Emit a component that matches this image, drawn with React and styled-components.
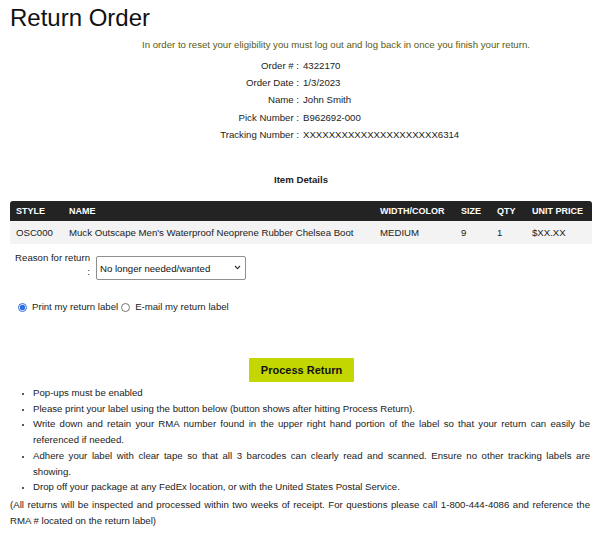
import React, { useState } from "react";
import styled, { createGlobalStyle } from "styled-components";

const GlobalStyle = createGlobalStyle`
  body {
    margin: 0;
    background: #fff;
    font-family: "Liberation Sans", Arial, sans-serif;
    color: #222;
  }
`;

const Page = styled.div`
  padding: 4px 8px 0 10px;
  font-size: 9.65px;
`;

const Title = styled.h1`
  margin: 0;
  font-size: 24px;
  line-height: 28px;
  font-weight: normal;
  color: #111;
`;

const Notice = styled.p`
  margin: 6px 0 0;
  padding-left: 70px;
  text-align: center;
  color: #5a5a14;
  line-height: 14px;
`;

const InfoGrid = styled.div`
  display: grid;
  grid-template-columns: 1fr 1fr;
  column-gap: 4px;
  margin-top: 5px;
  line-height: 17.2px;
`;

const InfoLabel = styled.div`
  text-align: right;
`;

const InfoValue = styled.div`
  text-align: left;
`;

const SectionTitle = styled.div`
  margin-top: 28px;
  text-align: center;
  font-weight: bold;
  line-height: 17px;
`;

const Table = styled.table`
  margin-top: 13px;
  width: 100%;
  border-collapse: collapse;
  table-layout: fixed;
`;

const HeadCell = styled.th`
  background: #232323;
  color: #fff;
  font-size: 9px;
  font-weight: bold;
  text-align: left;
  padding: 0 0 0 6px;
  height: 20px;
  white-space: nowrap;
  &:first-child {
    border-top-left-radius: 3px;
  }
  &:last-child {
    border-top-right-radius: 3px;
  }
`;

const Cell = styled.td`
  background: #f3f3f3;
  padding: 0 0 0 6px;
  height: 23px;
  white-space: nowrap;
`;

const ReasonRow = styled.div`
  display: flex;
  align-items: flex-start;
  margin-top: 12px;
`;

const ReasonLabel = styled.div`
  width: 80px;
  margin-top: -5px;
  text-align: right;
  line-height: 14px;
`;

const SelectWrap = styled.div`
  position: relative;
  margin-left: 6px;
`;

const Select = styled.select`
  appearance: none;
  width: 150px;
  height: 24px;
  border: 1px solid #8f8f8f;
  border-radius: 2px;
  background: #fff;
  font-family: "Liberation Sans", Arial, sans-serif;
  font-size: 9.65px;
  color: #111;
  padding: 0 0 0 3px;
  outline: none;
`;

const Chevron = styled.svg`
  position: absolute;
  right: 5px;
  top: 9px;
  pointer-events: none;
`;

const RadioRow = styled.div`
  display: flex;
  align-items: center;
  margin-top: 20px;
  margin-left: 8px;
  line-height: 14px;
`;

const Radio = styled.input`
  width: 9px;
  height: 9px;
  margin: 0 5px 0 0;
  accent-color: #2f6fe0;
`;

const RadioLabel = styled.label`
  display: flex;
  align-items: center;
  margin-right: 3px;
`;

const ButtonRow = styled.div`
  display: flex;
  justify-content: center;
  margin-top: 44px;
  padding-left: 1px;
`;

const ProcessButton = styled.button`
  width: 105px;
  height: 24px;
  border: none;
  border-radius: 1px;
  background: #c4d600;
  font-family: "Liberation Sans", Arial, sans-serif;
  font-size: 11px;
  font-weight: bold;
  color: #111;
  cursor: pointer;
`;

const Notes = styled.ul`
  margin: 3px 0 0;
  padding-left: 23px;
  line-height: 15.7px;
  text-align: justify;
  padding-right: 2px;
  li::marker {
    font-size: 8px;
  }
`;

const Footer = styled.p`
  margin: 2px 2px 0 0;
  line-height: 16px;
  text-align: justify;
`;

const info = [
  ["Order # :", "4322170"],
  ["Order Date :", "1/3/2023"],
  ["Name :", "John Smith"],
  ["Pick Number :", "B962692-000"],
  ["Tracking Number :", "XXXXXXXXXXXXXXXXXXXXX6314"],
];

const columns = [
  ["STYLE", 53],
  ["NAME", 311],
  ["WIDTH/COLOR", 81],
  ["SIZE", 36],
  ["QTY", 35],
  ["UNIT PRICE", 66],
];

const item = [
  "OSC000",
  "Muck Outscape Men's Waterproof Neoprene Rubber Chelsea Boot",
  "MEDIUM",
  "9",
  "1",
  "$XX.XX",
];

export default function App() {
  const [delivery, setDelivery] = useState("print");
  const [reason, setReason] = useState("none");

  return (
    <Page>
      <GlobalStyle />
      <Title>Return Order</Title>
      <Notice>
        In order to reset your eligibility you must log out and log back in
        once you finish your return.
      </Notice>

      <InfoGrid>
        {info.map(([label, value]) => (
          <React.Fragment key={label}>
            <InfoLabel>{label}</InfoLabel>
            <InfoValue>{value}</InfoValue>
          </React.Fragment>
        ))}
      </InfoGrid>

      <SectionTitle>Item Details</SectionTitle>

      <Table>
        <colgroup>
          {columns.map(([name, w]) => (
            <col key={name} style={{ width: w }} />
          ))}
        </colgroup>
        <thead>
          <tr>
            {columns.map(([name]) => (
              <HeadCell key={name}>{name}</HeadCell>
            ))}
          </tr>
        </thead>
        <tbody>
          <tr>
            {item.map((v, i) => (
              <Cell key={i}>{v}</Cell>
            ))}
          </tr>
        </tbody>
      </Table>

      <ReasonRow>
        <ReasonLabel>Reason for return :</ReasonLabel>
        <SelectWrap>
          <Select value={reason} onChange={(e) => setReason(e.target.value)}>
            <option value="none">No longer needed/wanted</option>
            <option value="size">Wrong size</option>
            <option value="defect">Defective</option>
          </Select>
          <Chevron width="7" height="5" viewBox="0 0 7 5">
            <path d="M1 1 L3.5 3.6 L6 1" fill="none" stroke="#333" strokeWidth="1.1" />
          </Chevron>
        </SelectWrap>
      </ReasonRow>

      <RadioRow>
        <RadioLabel>
          <Radio
            type="radio"
            name="label"
            checked={delivery === "print"}
            onChange={() => setDelivery("print")}
          />
          Print my return label
        </RadioLabel>
        <RadioLabel>
          <Radio
            type="radio"
            name="label"
            checked={delivery === "email"}
            onChange={() => setDelivery("email")}
          />
          E-mail my return label
        </RadioLabel>
      </RadioRow>

      <ButtonRow>
        <ProcessButton>Process Return</ProcessButton>
      </ButtonRow>

      <Notes>
        <li>Pop-ups must be enabled</li>
        <li>
          Please print your label using the button below (button shows after
          hitting Process Return).
        </li>
        <li>
          Write down and retain your RMA number found in the upper right hand
          portion of the label so that your return can easily be referenced if
          needed.
        </li>
        <li>
          Adhere your label with clear tape so that all 3 barcodes can clearly
          read and scanned. Ensure no other tracking labels are showing.
        </li>
        <li>
          Drop off your package at any FedEx location, or with the United
          States Postal Service.
        </li>
      </Notes>

      <Footer>
        (All returns will be inspected and processed within two weeks of
        receipt. For questions please call 1-800-444-4086 and reference the
        RMA # located on the return label)
      </Footer>
    </Page>
  );
}
